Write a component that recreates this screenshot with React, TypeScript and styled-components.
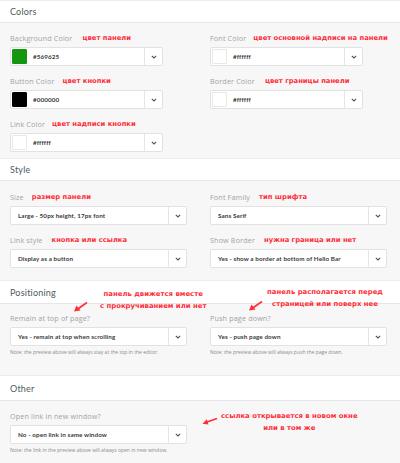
import React from "react";
import styled, { createGlobalStyle } from "styled-components";

const Global = createGlobalStyle`
  html, body { margin: 0; padding: 0; background: #f7f7f7; }
  body { width: 400px; height: 463px; overflow: hidden; font-family: "Open Sans", Lato, sans-serif; }
`;

const Page = styled.div`
  width: 400px;
  display: flex;
  flex-direction: column;
`;

const Section = styled.section`
  position: relative;
  display: flex;
  flex-direction: column;
`;

const Header = styled.div<{ $h: number }>`
  height: ${(p) => p.$h}px;
  box-sizing: border-box;
  background: #ffffff;
  border-bottom: 1px solid #e6e6e6;
  border-top: 1px solid #ececec;
  display: flex;
  align-items: center;
  padding-left: 10px;
  font-family: Lato, sans-serif;
  font-size: 9px;
  color: #4c5b60;
  letter-spacing: 0.2px;
`;

const Body = styled.div<{ $pt: number; $pb: number }>`
  background: #f7f7f7;
  padding: ${(p) => p.$pt}px 10px ${(p) => p.$pb}px 10px;
  display: grid;
  grid-template-columns: 177px 177px;
  column-gap: 23px;
  row-gap: 10px;
`;

const Field = styled.div`
  display: flex;
  flex-direction: column;
  gap: 4px;
`;

const LabelRow = styled.div`
  height: 10px;
  display: flex;
  align-items: center;
  white-space: nowrap;
`;

const Label = styled.span`
  font-size: 7.2px;
  letter-spacing: 0.15px;
  color: #a3a3a3;
`;

const Note = styled.span<{ $dx: number }>`
  margin-left: ${(p) => p.$dx}px;
  font-family: "DejaVu Sans", sans-serif;
  font-weight: bold;
  font-size: 6.8px;
  color: #ff2d3a;
`;

const Box = styled.div<{ $w: number }>`
  width: ${(p) => p.$w}px;
  height: 19px;
  box-sizing: border-box;
  background: #fff;
  border: 1px solid #e2e2e2;
  border-radius: 2px;
  display: flex;
  align-items: center;
`;

const Swatch = styled.span<{ $c: string }>`
  width: 15px;
  height: 15px;
  margin-left: 1px;
  box-sizing: border-box;
  background: ${(p) => p.$c};
  border: 1px solid ${(p) => (p.$c === "#ffffff" ? "#e8e8e8" : p.$c)};
  border-radius: 1px;
`;

const Value = styled.span<{ $pl: number }>`
  flex: 1;
  padding-left: ${(p) => p.$pl}px;
  font-family: Lato, sans-serif;
  font-size: 6.3px;
  font-weight: bold;
  letter-spacing: 0.1px;
  color: #3a3a3a;
  white-space: nowrap;
  overflow: hidden;
`;

const Caret = styled.span`
  width: 17px;
  align-self: stretch;
  border-left: 1px solid #e6e6e6;
  display: flex;
  align-items: center;
  justify-content: center;
`;

const Hint = styled.div`
  margin-top: 3px;
  font-size: 5px;
  color: #8a8a8a;
  white-space: nowrap;
`;

const Overlay = styled.div<{ $x: number; $y: number }>`
  position: absolute;
  left: ${(p) => p.$x}px;
  top: ${(p) => p.$y}px;
  display: flex;
  flex-direction: column;
  align-items: center;
  font-family: "DejaVu Sans", sans-serif;
  font-weight: bold;
  font-size: 6.9px;
  line-height: 12px;
  color: #ff2d3a;
  white-space: nowrap;
`;

const Arrow = styled.svg<{ $x: number; $y: number }>`
  position: absolute;
  left: ${(p) => p.$x}px;
  top: ${(p) => p.$y}px;
`;

const Chevron = () => (
  <svg width="6" height="4" viewBox="0 0 6 4">
    <path d="M0.8 0.8 L3 3 L5.2 0.8" fill="none" stroke="#555" strokeWidth="1.1" />
  </svg>
);

const ColorInput = ({ color, text }: { color: string; text: string }) => (
  <Box $w={153}>
    <Swatch $c={color} />
    <Value $pl={6}>{text}</Value>
    <Caret>
      <Chevron />
    </Caret>
  </Box>
);

const Select = ({ text }: { text: string }) => (
  <Box $w={177}>
    <Value $pl={7}>{text}</Value>
    <Caret>
      <Chevron />
    </Caret>
  </Box>
);

const DownLeft = ({ x, y }: { x: number; y: number }) => (
  <Arrow $x={x} $y={y} width="16" height="12" viewBox="0 0 16 12">
    <path d="M14 1.5 L4 8.5" stroke="#ff2d3a" strokeWidth="1.6" fill="none" />
    <path d="M1 10.5 L7.5 9.5 L3.5 4.5 Z" fill="#ff2d3a" />
  </Arrow>
);

const Left = ({ x, y }: { x: number; y: number }) => (
  <Arrow $x={x} $y={y} width="16" height="8" viewBox="0 0 16 8">
    <path d="M15 1.5 L5 5" stroke="#ff2d3a" strokeWidth="1.6" fill="none" />
    <path d="M0.5 6.8 L6.5 7.5 L4.8 2.2 Z" fill="#ff2d3a" />
  </Arrow>
);

export default function App() {
  return (
    <Page>
      <Global />
      <Section>
        <Header $h={23}>Colors</Header>
        <Body $pt={10} $pb={6}>
          <Field>
            <LabelRow>
              <Label>Background Color</Label>
              <Note $dx={10}>цвет панели</Note>
            </LabelRow>
            <ColorInput color="#14960f" text="#569625" />
          </Field>
          <Field>
            <LabelRow>
              <Label>Font Color</Label>
              <Note $dx={7}>цвет основной надписи на панели</Note>
            </LabelRow>
            <ColorInput color="#ffffff" text="#ffffff" />
          </Field>
          <Field>
            <LabelRow>
              <Label>Button Color</Label>
              <Note $dx={8}>цвет кнопки</Note>
            </LabelRow>
            <ColorInput color="#000000" text="#000000" />
          </Field>
          <Field>
            <LabelRow>
              <Label>Border Color</Label>
              <Note $dx={10}>цвет границы панели</Note>
            </LabelRow>
            <ColorInput color="#ffffff" text="#ffffff" />
          </Field>
          <Field>
            <LabelRow>
              <Label>Link Color</Label>
              <Note $dx={7}>цвет надписи кнопки</Note>
            </LabelRow>
            <ColorInput color="#ffffff" text="#ffffff" />
          </Field>
        </Body>
      </Section>

      <Section>
        <Header $h={23}>Style</Header>
        <Body $pt={11} $pb={12}>
          <Field>
            <LabelRow>
              <Label>Size</Label>
              <Note $dx={8}>размер панели</Note>
            </LabelRow>
            <Select text="Large - 50px height, 17px font" />
          </Field>
          <Field>
            <LabelRow>
              <Label>Font Family</Label>
              <Note $dx={9}>тип шрифта</Note>
            </LabelRow>
            <Select text="Sans Serif" />
          </Field>
          <Field>
            <LabelRow>
              <Label>Link style</Label>
              <Note $dx={9}>кнопка или ссылка</Note>
            </LabelRow>
            <Select text="Display as a button" />
          </Field>
          <Field>
            <LabelRow>
              <Label>Show Border</Label>
              <Note $dx={9}>нужна граница или нет</Note>
            </LabelRow>
            <Select text="Yes - show a border at bottom of Hello Bar" />
          </Field>
        </Body>
      </Section>

      <Section>
        <Header $h={24}>Positioning</Header>
        <Body $pt={9} $pb={20}>
          <Field>
            <LabelRow>
              <Label>Remain at top of page?</Label>
            </LabelRow>
            <div>
              <Select text="Yes - remain at top when scrolling" />
              <Hint>Note: the preview above will always stay at the top in the editor.</Hint>
            </div>
          </Field>
          <Field>
            <LabelRow>
              <Label>Push page down?</Label>
            </LabelRow>
            <div>
              <Select text="Yes - push page down" />
              <Hint>Note: the preview above will always push the page down.</Hint>
            </div>
          </Field>
        </Body>
        <Overlay $x={100} $y={8}>
          <span>панель движется вместе</span>
          <span>с прокручиванием или нет</span>
        </Overlay>
        <DownLeft x={73} y={21} />
        <Overlay $x={267} $y={6}>
          <span>панель располагается перед</span>
          <span>страницей или поверх нее</span>
        </Overlay>
        <DownLeft x={248} y={20} />
      </Section>

      <Section>
        <Header $h={26}>Other</Header>
        <Body $pt={10} $pb={6}>
          <Field>
            <LabelRow>
              <Label>Open link in new window?</Label>
            </LabelRow>
            <div>
              <Select text="No - open link in same window" />
              <Hint>Note: the link in the preview above will always open in new window.</Hint>
            </div>
          </Field>
        </Body>
        <Overlay $x={221} $y={35}>
          <span>ссылка открывается в новом окне</span>
          <span>или в том же</span>
        </Overlay>
        <Left x={202} y={42} />
      </Section>
    </Page>
  );
}
